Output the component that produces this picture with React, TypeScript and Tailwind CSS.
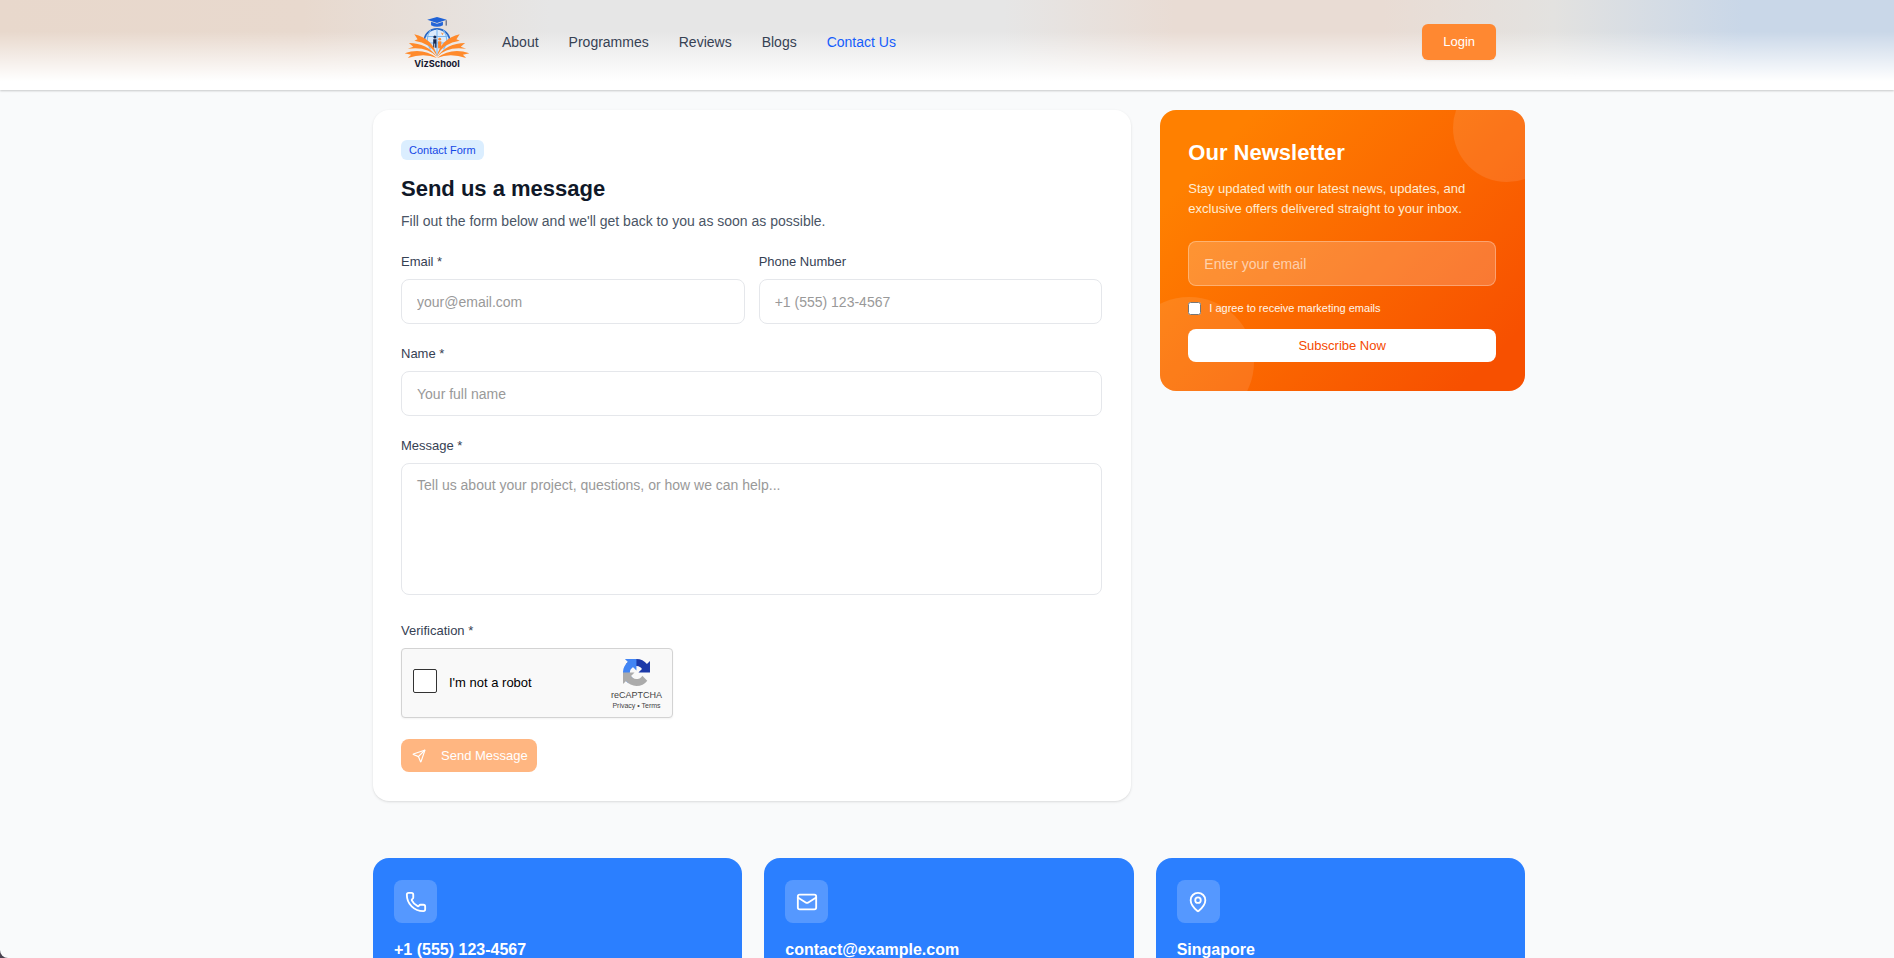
import type { ReactNode } from "react";
import { Mail, MapPin, Phone, Send } from "lucide-react";

const navLinks = [
  { label: "About", active: false },
  { label: "Programmes", active: false },
  { label: "Reviews", active: false },
  { label: "Blogs", active: false },
  { label: "Contact Us", active: true },
];

const contactCards = [
  { icon: Phone, title: "+1 (555) 123-4567" },
  { icon: Mail, title: "contact@example.com" },
  { icon: MapPin, title: "Singapore" },
];

const fieldClass =
  "block w-full rounded-lg border border-gray-200 bg-white px-[15px] text-[14px] text-gray-900 placeholder:text-[#999]";

function Logo() {
  return (
    <svg viewBox="0 0 66 50" className="h-[54px] w-[72px]" role="img" aria-label="VizSchool">
      <circle cx="33" cy="22" r="12" fill="#dcebfa" />
      <path d="M21 23a12 12 0 0 1 24 0" fill="none" stroke="#2866c4" strokeWidth="1.6" />
      <path d="M33 11v25M27 12q-6 9 0 18M39 12q6 9 0 18M23 18h20M22 24h22" fill="none" stroke="#7db8ee" strokeWidth="1" />
      <circle cx="31" cy="18.5" r="1.4" fill="#17294f" />
      <path d="M29.5 20.500h3v8h-1.2v-4h-.8v4h-1z" fill="#17294f" />
      <circle cx="35.500" cy="20.500" r="1.300" fill="#ff8a2b" />
      <path d="M34 22.500h3v6.500h-3z" fill="#ff8a2b" />
      <path d="m36.500 14 1.500 1.300 1.500-1.300-1.500 3z" fill="#ff8a2b" />
      <path d="m33 0 9 2.500-9 3-9-3z" fill="#1f62d6" />
      <path d="M27.500 4.500 33 6.300l5.500-1.800v3.200Q33 10.500 27.500 7.700z" fill="#2466d8" />
      <path d="M41.500 3v5" stroke="#26355d" strokeWidth="0.8" />
      <g fill="#ff8a2b">
        <path d="M33 36Q29 20 12 16l3 4.500-3 1.500Q27 24 33 36z" />
        <path d="M33 37Q24 24 7 24l4 3.500-5 2Q24 27 33 37z" />
        <path d="M33 38Q20 28 3 33.500l6 1.500L6 38q15-5 27 0z" />
        <path d="M33 36Q37 20 54 16l-3 4.500 3 1.500Q39 24 33 36z" />
        <path d="M33 37Q42 24 59 24l-4 3.500 5 2Q42 27 33 37z" />
        <path d="M33 38q13-10 30-4.500l-6 1.500 3 3q-15-5-27 0z" />
      </g>
      <text x="33" y="46" textAnchor="middle" fontFamily="Inter, sans-serif" fontWeight="700" fontSize="8.5" fill="#17172f">
        VizSchool
      </text>
    </svg>
  );
}

function RecaptchaLogo() {
  return (
    <svg viewBox="0 0 64 64" className="size-[27px]" aria-hidden="true">
      <path fill="#1c3aa9" d="M64 31.955a33 33 0 0 0-.037-1.380V4.640l-7.170 7.170C50.925 4.629 41.993.036 31.989.036c-10.410 0-19.660 4.973-25.500 12.680L18.241 24.590a15.570 15.570 0 0 1 4.760-5.340c2.050-1.600 4.960-2.910 8.990-2.910.486 0 .862.057 1.138.164 4.990.394 9.310 3.150 11.860 7.140l-8.320 8.320 27.330-.009" />
      <path fill="#4285f4" d="M31.862.036a33 33 0 0 0-1.380.037H4.547l7.170 7.170C4.536 13.111-.057 22.043-.057 32.047c0 10.410 4.973 19.660 12.680 25.500l11.874-11.752a15.570 15.570 0 0 1-5.340-4.760c-1.600-2.050-2.910-4.960-2.910-8.990 0-.486.057-.862.164-1.138.394-4.990 3.150-9.310 7.140-11.860l8.320 8.320-.009-27.330" />
      <path fill="#ababab" d="M.001 32.045c.001.463.013.923.037 1.380V59.360l7.170-7.170c5.868 7.182 14.800 11.775 24.804 11.775 10.410 0 19.660-4.973 25.500-12.680L45.759 39.411a15.570 15.570 0 0 1-4.760 5.340c-2.050 1.600-4.960 2.910-8.990 2.910-.486 0-.862-.057-1.138-.164-4.990-.394-9.310-3.150-11.860-7.140l8.320-8.320-27.330.009" />
    </svg>
  );
}

function Field({ id, label, children }: { id: string; label: string; children: ReactNode }) {
  return (
    <div>
      <label htmlFor={id} className="mb-2 block text-[13px] leading-[18px] text-gray-700">
        {label}
      </label>
      {children}
    </div>
  );
}

function Header() {
  return (
    <header className="bg-[linear-gradient(to_bottom,transparent_35%,white_90%),linear-gradient(to_right,#e8d8cc_0%,#e8d9ce_16%,#e6e6e6_29%,#e6e6e6_53%,#e9dcd4_62%,#e9dcd4_73%,#e3e2e0_82%,#c9d7e8_92%,#c9d7e8_100%)] pl-1 shadow-[0_1px_2px_rgba(0,0,0,0.2)]">
      <div className="mx-auto flex max-w-6xl items-center pt-[17px] pr-[29px] pb-[19px] pl-7">
        <a href="#home" className="mr-[29px]">
          <Logo />
        </a>
        <nav className="mb-1 flex gap-[30px]">
          {navLinks.map(link => (
            <a
              key={link.label}
              href="#"
              className={`text-[14px] leading-5 ${link.active ? "text-[#155dfc]" : "text-gray-700"}`}
            >
              {link.label}
            </a>
          ))}
        </nav>
        <button
          type="button"
          className="mb-1 ml-auto h-9 rounded-md bg-[#ff8831] px-[21px] text-[13px] text-white shadow-xs"
        >
          Login
        </button>
      </div>
    </header>
  );
}

function ContactForm() {
  return (
    <section className="rounded-2xl bg-white py-[29px] pr-[29px] pl-7 shadow-sm lg:col-span-2">
      <span className="mt-px block w-fit rounded-md bg-[#dbeeff] px-2 text-[11px] leading-5 text-[#1447e6]">
        Contact Form
      </span>
      <h1 className="mt-[13px] text-[22px] leading-8 font-bold text-gray-900">Send us a message</h1>
      <p className="mt-[6px] text-[14px] leading-5 text-gray-600">
        Fill out the form below and we'll get back to you as soon as possible.
      </p>
      <form className="mt-[22px] flex flex-col gap-[21px]" onSubmit={e => e.preventDefault()}>
        <div className="grid grid-cols-2 gap-[14px]">
          <Field id="email" label="Email *">
            <input id="email" type="email" placeholder="your@email.com" className={`h-[45px] ${fieldClass}`} />
          </Field>
          <Field id="phone" label="Phone Number">
            <input id="phone" type="tel" placeholder="+1 (555) 123-4567" className={`h-[45px] ${fieldClass}`} />
          </Field>
        </div>
        <Field id="name" label="Name *">
          <input id="name" type="text" placeholder="Your full name" className={`h-[45px] ${fieldClass}`} />
        </Field>
        <Field id="message" label="Message *">
          <textarea
            id="message"
            placeholder="Tell us about your project, questions, or how we can help..."
            className={`mb-[6px] h-[132px] resize-none py-[11px] leading-5 ${fieldClass}`}
          />
        </Field>
        <Field id="robot" label="Verification *">
          <div className="flex h-[70px] w-[272px] items-center rounded-sm border border-[#d3d3d3] bg-[#f9f9f9] pr-[10px] pl-[11px] shadow-xs">
            <input
              id="robot"
              type="checkbox"
              className="mb-1 size-6 appearance-none rounded-xs border border-[#333] bg-white"
            />
            <label htmlFor="robot" className="ml-3 text-[13px] text-black">
              I'm not a robot
            </label>
            <div className="ml-auto flex flex-col items-center self-start pt-[10px] text-[#444]">
              <RecaptchaLogo />
              <span className="mt-[2px] text-[9px] leading-[14px]">reCAPTCHA</span>
              <span className="text-[7px] leading-2">
                <a href="#privacy">Privacy</a> • <a href="#terms">Terms</a>
              </span>
            </div>
          </div>
        </Field>
        <button
          type="submit"
          className="flex h-[33px] w-fit items-center gap-[15px] rounded-lg bg-[#ffb681] pr-[9px] pl-[11px] text-[13px] text-white"
        >
          <Send className="size-[14px]" />
          Send Message
        </button>
      </form>
    </section>
  );
}

function Newsletter() {
  return (
    <aside className="relative overflow-hidden rounded-2xl bg-[linear-gradient(135deg,#ff8000_15%,#f75000_90%)] py-[29px] pr-[29px] pl-7 text-white">
      <div className="absolute -top-9 -right-9 size-[108px] rounded-full bg-white/10" />
      <div className="absolute -bottom-9 -left-9 size-[130px] rounded-full bg-white/10" />
      <div className="relative">
        <h2 className="text-[22px] leading-7 font-bold">Our Newsletter</h2>
        <p className="mt-3 text-[13px] leading-5 text-orange-100">
          Stay updated with our latest news, updates, and exclusive offers delivered straight to your inbox.
        </p>
        <form className="mt-[22px]" onSubmit={e => e.preventDefault()}>
          <input
            type="email"
            aria-label="Newsletter email"
            placeholder="Enter your email"
            className="block h-[45px] w-full rounded-lg border border-white/30 bg-white/20 px-[15px] text-[14px] placeholder:text-white/60"
          />
          <label className="mt-[15px] flex items-center gap-2 text-[11px] leading-[14px] text-orange-50">
            <input type="checkbox" className="size-[13px]" />
            I agree to receive marketing emails
          </label>
          <button type="submit" className="mt-[14px] h-[33px] w-full rounded-lg bg-white text-[13px] text-[#f54900]">
            Subscribe Now
          </button>
        </form>
      </div>
    </aside>
  );
}

export default function App() {
  return (
    <div className="bg-[#4a4350] font-['Liberation_Sans',Arial,sans-serif]">
      <div className="h-screen overflow-hidden rounded-bl-lg bg-[#f9fafb]">
        <Header />
        <main className="pl-1">
          <div className="mx-auto max-w-6xl pt-5">
            <div className="grid items-start gap-[29px] lg:grid-cols-3">
              <ContactForm />
              <Newsletter />
            </div>
            <div className="mt-[57px] grid gap-[22px] lg:grid-cols-3">
              {contactCards.map(({ icon: Icon, title }) => (
                <article key={title} className="rounded-2xl bg-[#2b7fff] px-[21px] py-[22px] text-white">
                  <div className="flex size-[43px] items-center justify-center rounded-lg bg-white/20">
                    <Icon className="size-[22px]" />
                  </div>
                  <h3 className="mt-[13px] text-[16px] leading-7 font-bold">{title}</h3>
                </article>
              ))}
            </div>
          </div>
        </main>
      </div>
    </div>
  );
}
